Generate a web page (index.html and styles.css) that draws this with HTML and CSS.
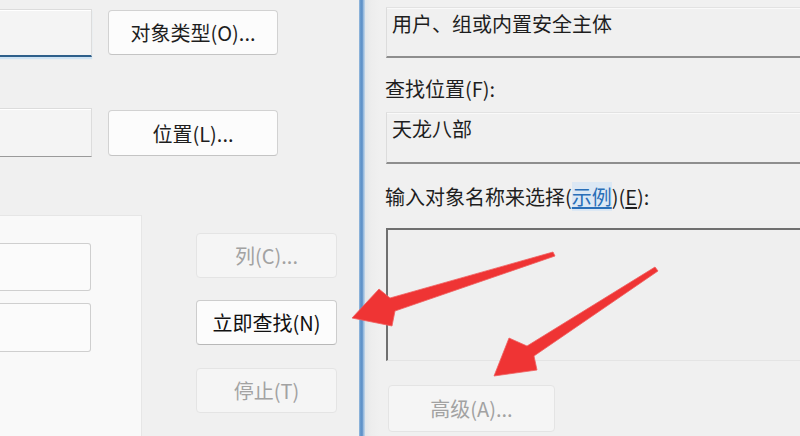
FILE: index.html
```html
<!DOCTYPE html>
<html lang="zh-CN">
<head>
<meta charset="utf-8">
<title>选择用户或组</title>
<link rel="stylesheet" href="styles.css">
</head>
<body>
<div class="screen">
  <div class="left">
    <div class="row r1">
      <div class="field focus"></div>
      <div class="btn">对象类型(O)...</div>
    </div>
    <div class="row r2">
      <div class="field"></div>
      <div class="btn">位置(L)...</div>
    </div>
    <div class="lower">
      <div class="panel">
        <div class="pfield"></div>
        <div class="pfield second"></div>
      </div>
      <div class="btncol">
        <div class="btn dis">列(C)...</div>
        <div class="btn def">立即查找(N)</div>
        <div class="btn dis">停止(T)</div>
      </div>
    </div>
  </div>
  <div class="divider"></div>
  <div class="right">
    <div class="box b1">用户、组或内置安全主体</div>
    <div class="label l1">查找位置(F):</div>
    <div class="box b2">天龙八部</div>
    <div class="label l2">输入对象名称来选择(<span class="link">示例</span>)(<u>E</u>):</div>
    <div class="textarea"></div>
    <div class="btn dis adv">高级(A)...</div>
  </div>
  <svg class="arrows" width="800" height="436" viewBox="0 0 800 436">
    <polygon class="arrow" points="553,252 390,298 379,289 352,318 392,326 395,311 555,256"/>
    <polygon class="arrow" points="655,267 527,346 509,338 494,376 537,370 534,356 658,271"/>
  </svg>
</div>
</body>
</html>
```
FILE: styles.css
```css
* { box-sizing: border-box; }
html, body {
  margin: 0;
  padding: 0;
  width: 800px;
  height: 436px;
  overflow: hidden;
  background: #f0f0f0;
  font-family: "Noto Sans CJK SC", "Noto Sans", sans-serif;
  font-size: 20px;
  color: #1e1e1e;
}
.screen {
  position: relative;
  display: flex;
  width: 800px;
  height: 436px;
  overflow: hidden;
}
.left {
  width: 359px;
  flex: none;
  background: #f0f0f0;
  display: flex;
  flex-direction: column;
}
.row {
  display: flex;
  align-items: flex-start;
}
.r1 { margin-top: 9px; }
.r2 { margin-top: 51px; }
.field {
  width: 92px;
  height: 48px;
  background: #f4f4f4;
  border: 1px solid #dcdcdc;
  border-left: none;
  border-bottom: 1px solid #9a9a9a;
  box-shadow: inset 0 1px 0 #ffffff;
}
.field.focus {
  border-bottom: 2px solid #2e5f8a;
  box-shadow: inset 0 1px 0 #ffffff, 0 2px 1px #cfe3f3;
}
.r2 .field { height: 49px; }
.btn {
  display: flex;
  align-items: center;
  justify-content: center;
  height: 45px;
  border: 1px solid #d2d2d2;
  border-bottom-color: #c4c4c4;
  border-radius: 4px;
  background: #fcfcfc;
  color: #1e1e1e;
  white-space: nowrap;
}
.row .btn {
  width: 170px;
  margin-left: 16px;
  margin-top: 1px;
}
.r2 .btn { margin-top: 2px; height: 46px; }
.btn.dis {
  background: #f5f5f5;
  border-color: #e4e4e4;
  color: #a2a2a2;
}
.btn.def {
  color: #111;
  border-color: #cdcdcd;
  border-bottom-color: #b8b8b8;
}
.lower {
  display: flex;
  margin-top: 58px;
  flex: 1;
}
.panel {
  width: 142px;
  flex: none;
  background: #f9f9f9;
  border-top: 1px solid #e6e6e6;
  border-right: 1px solid #e6e6e6;
  padding-top: 27px;
  display: flex;
  flex-direction: column;
}
.pfield {
  width: 91px;
  height: 48px;
  background: #fbfbfb;
  border: 1px solid #cfcfcf;
  border-left: none;
  border-radius: 0 3px 3px 0;
}
.pfield.second {
  margin-top: 12px;
  height: 49px;
}
.btncol {
  margin-left: 54px;
  padding-top: 18px;
  display: flex;
  flex-direction: column;
  gap: 22px;
}
.btncol .btn { width: 141px; }
.btncol .btn:last-child { margin-top: 1px; }
.divider {
  width: 6px;
  flex: none;
  background: linear-gradient(to right, #a9c6e2 0, #6c9dd0 1px, #5b8fc6 3px, #7aa6d4 4px, #b7cfe6 5px);
}
.right {
  flex: 1;
  min-width: 0;
  overflow: hidden;
  background: linear-gradient(to right, #e2e6ea 0, #ededed 6px, #f0f0f0 14px, #f0f0f0 100%);
  padding-left: 20px;
  display: flex;
  flex-direction: column;
  align-items: flex-start;
}
.box {
  margin-left: 1px;
  width: 414px;
  height: 51px;
  background: #f0f0f0;
  border-top: 1px solid #e2e2e2;
  border-left: 1px solid #dcdcdc;
  border-bottom: 2px solid #8e8e8e;
  box-shadow: inset 0 1px 0 #f9f9f9;
  padding: 2px 0 0 5px;
  line-height: 28px;
  color: #1e1e1e;
}
.b1 { margin-top: 7px; }
.b2 { height: 52px; }
.label {
  line-height: 28px;
  color: #1e1e1e;
}
.l1 { margin-top: 17px; margin-bottom: 9px; }
.l2 { margin-top: 19px; margin-bottom: 17px; }
.label u { text-decoration: underline; text-underline-offset: 2px; }
.link {
  color: #2a6fb8;
  background: #dce8f4;
  text-decoration: underline;
  text-underline-offset: 2px;
}
.textarea {
  margin-left: 1px;
  width: 414px;
  height: 133px;
  background: #efefef;
  border-top: 2px solid #6f6f6f;
  border-left: 2px solid #6f6f6f;
  border-bottom: 1px solid #e4e4e4;
}
.adv {
  margin-top: 24px;
  margin-left: 3px;
  width: 167px;
  height: 47px;
}
.arrows {
  position: absolute;
  left: 0;
  top: 0;
  pointer-events: none;
}
.arrow {
  fill: #ef3434;
  stroke: #f06060;
  stroke-width: 0.8;
  stroke-linejoin: round;
}
```
